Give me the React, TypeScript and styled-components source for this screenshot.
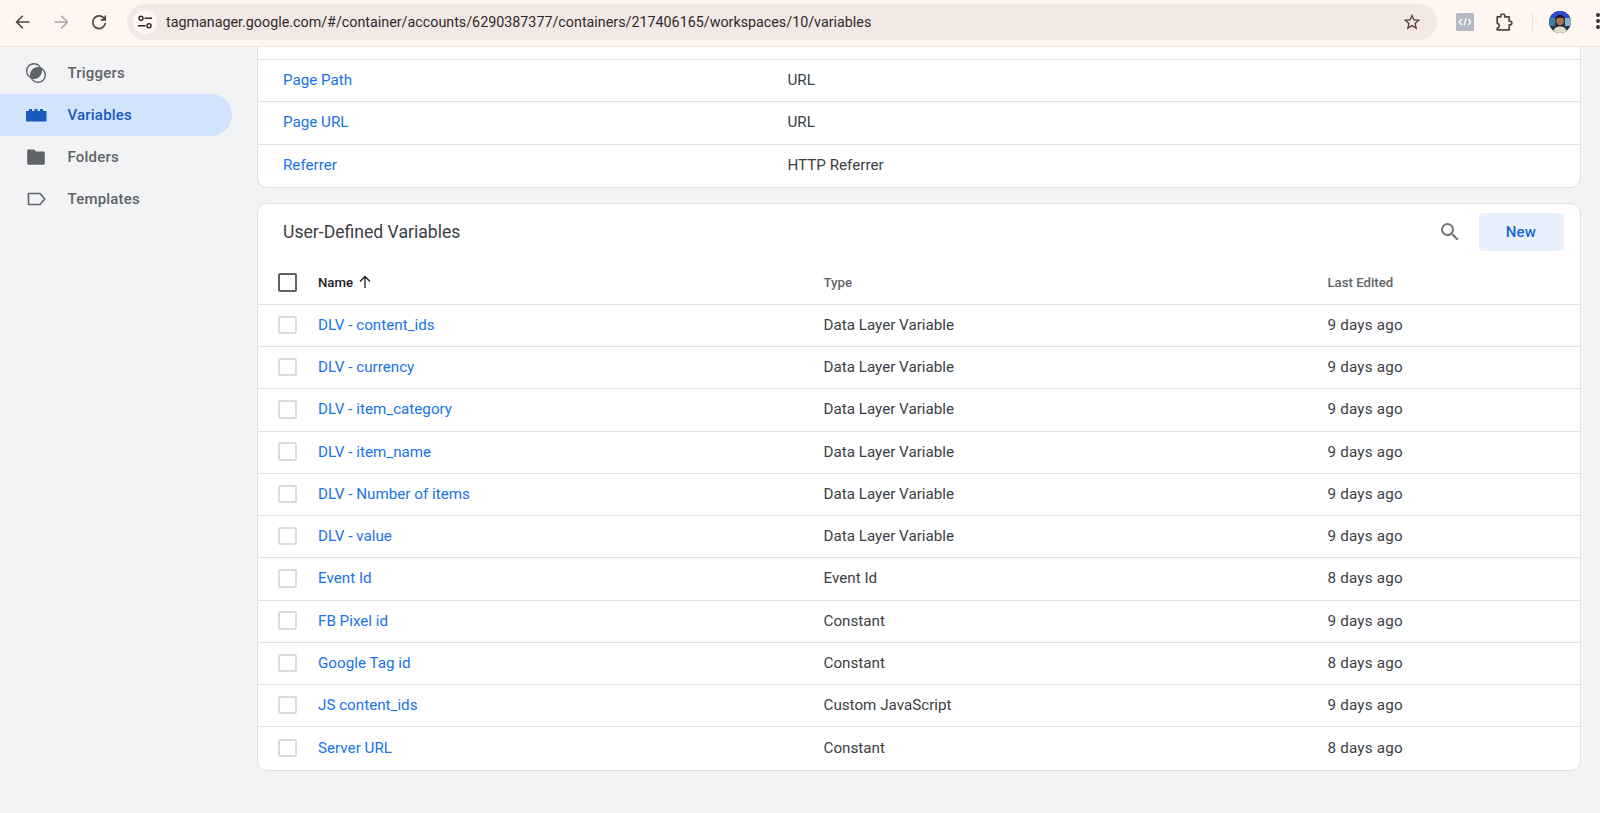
import React from "react";
import styled, { createGlobalStyle } from "styled-components";

const Global = createGlobalStyle`
  html, body { margin: 0; padding: 0; height: 100%; background: #f1f3f5; }
  body { font-family: Roboto, "Liberation Sans", sans-serif; overflow: hidden; }
  * { box-sizing: border-box; }
`;

const Page = styled.div`
  width: 1600px;
  height: 813px;
  display: flex;
  flex-direction: column;
  overflow: hidden;
  background: #f1f3f5;
`;

const ChromeBar = styled.header`
  height: 47px;
  flex: none;
  display: flex;
  align-items: center;
  background: #fff5f1;
  border-bottom: 1px solid #fbdccd;
  padding: 0 0 2px 11px;
  position: relative;
`;

const NavButton = styled.span<{ $dim?: boolean }>`
  width: 24px;
  height: 24px;
  margin-right: 14px;
  flex: none;
  display: flex;
  color: ${(p) => (p.$dim ? "#aaa6a4" : "#55433c")};
`;

const UrlPill = styled.div`
  width: 1310px;
  height: 36px;
  margin-left: 2px;
  flex: none;
  border-radius: 18px;
  background: #f4e8e5;
  display: flex;
  align-items: center;
  padding: 0 15px 0 6px;
`;

const SiteChip = styled.span`
  width: 24px;
  height: 24px;
  border-radius: 50%;
  background: #fff7f4;
  color: #2c2422;
  display: flex;
  align-items: center;
  justify-content: center;
  flex: none;
`;

const UrlText = styled.span`
  margin-left: 9px;
  font-size: 14.3px;
  color: #2f2a2a;
  white-space: nowrap;
  flex: 1;
`;

const ChromeIcon = styled.span<{ $gap?: number }>`
  display: flex;
  flex: none;
  color: #55433c;
  margin-left: ${(p) => p.$gap ?? 0}px;
`;

const Separator = styled.span`
  width: 1px;
  height: 18px;
  background: #fbd9c9;
  margin-left: 18px;
  flex: none;
`;

const Dots = styled.span`
  position: absolute;
  left: 1596px;
  top: 13px;
  display: flex;
  flex-direction: column;
  gap: 2.4px;
`;

const Dot = styled.i`
  width: 3.8px;
  height: 3.8px;
  border-radius: 50%;
  background: #3d3230;
  display: block;
`;

const Body = styled.div`
  flex: 1;
  display: flex;
  min-height: 0;
`;

const Sidebar = styled.nav`
  width: 257px;
  flex: none;
  padding: 4.5px 25px 0 0;
`;

const NavItem = styled.div<{ $active?: boolean }>`
  height: 42.25px;
  display: flex;
  align-items: center;
  padding-left: 25px;
  border-radius: 0 21px 21px 0;
  font-size: 15px;
  font-weight: 500;
  letter-spacing: 0.2px;
  color: ${(p) => (p.$active ? "#185abc" : "#5f6368")};
  background: ${(p) => (p.$active ? "#d2e3fc" : "transparent")};
`;

const NavIcon = styled.span`
  width: 22px;
  height: 22px;
  margin-right: 20.5px;
  display: flex;
  flex: none;
`;

const Main = styled.main`
  flex: 1;
  display: flex;
  flex-direction: column;
  gap: 15px;
  padding-right: 19.5px;
`;

const Card = styled.section<{ $flatTop?: boolean }>`
  background: #fff;
  border: 1px solid #dfe1e5;
  border-top-width: ${(p) => (p.$flatTop ? 0 : 1)}px;
  border-radius: ${(p) => (p.$flatTop ? "0 0 10px 10px" : "10px")};
`;

const TopGap = styled.div`
  height: 13px;
  border-bottom: 1px solid #dfe1e5;
`;

const BuiltInRow = styled.div`
  height: 42.25px;
  display: grid;
  grid-template-columns: 504.5px 1fr;
  align-items: center;
  padding: 0 0 2px 25px;
  border-bottom: 1px solid #dfe1e5;
  &:last-child { border-bottom: 0; }
`;

const LinkText = styled.a`
  color: #1a73e8;
  font-size: 15.2px;
  text-decoration: none;
`;

const CellText = styled.span<{ $wide?: boolean }>`
  color: #3c4043;
  font-size: 15.2px;
  letter-spacing: ${(p) => (p.$wide ? "0.2px" : "0")};
`;

const CardHeader = styled.div`
  height: 56px;
  display: flex;
  align-items: center;
  padding: 0 16px 0 25px;
`;

const CardTitle = styled.h2`
  margin: 0;
  flex: 1;
  font-size: 17.6px;
  font-weight: 400;
  color: #3c4043;
`;

const SearchButton = styled.span`
  display: flex;
  color: #70757a;
  margin-right: 17px;
`;

const NewButton = styled.button`
  width: 85px;
  height: 38px;
  border: 0;
  border-radius: 4px;
  background: #e8f0fe;
  color: #1967d2;
  font: 500 15px Roboto, sans-serif;
  letter-spacing: 0.2px;
`;

const HeadRow = styled.div`
  height: 45px;
  padding-top: 1px;
  display: grid;
  grid-template-columns: 40px 505.5px 504px 1fr;
  align-items: center;
  padding-left: 20px;
  border-bottom: 1px solid #dfe1e5;
`;

const HeadCell = styled.span<{ $strong?: boolean }>`
  display: flex;
  align-items: center;
  gap: 5px;
  font-size: 13.2px;
  font-weight: 500;
  color: ${(p) => (p.$strong ? "#202124" : "#5f6368")};
`;

const DataRow = styled.div`
  height: 42.25px;
  display: grid;
  grid-template-columns: 40px 505.5px 504px 1fr;
  align-items: center;
  padding: 0 0 1px 20px;
  border-bottom: 1px solid #dfe1e5;
  &:last-child { border-bottom: 0; }
`;

const Check = styled.span<{ $dark?: boolean }>`
  width: 18.5px;
  height: 18.5px;
  border-radius: 2px;
  border: 2px solid ${(p) => (p.$dark ? "#5f6368" : "#dadce0")};
  display: block;
`;

const builtIn = [
  ["Page Path", "URL"],
  ["Page URL", "URL"],
  ["Referrer", "HTTP Referrer"],
];

const variables = [
  ["DLV - content_ids", "Data Layer Variable", "9 days ago"],
  ["DLV - currency", "Data Layer Variable", "9 days ago"],
  ["DLV - item_category", "Data Layer Variable", "9 days ago"],
  ["DLV - item_name", "Data Layer Variable", "9 days ago"],
  ["DLV - Number of items", "Data Layer Variable", "9 days ago"],
  ["DLV - value", "Data Layer Variable", "9 days ago"],
  ["Event Id", "Event Id", "8 days ago"],
  ["FB Pixel id", "Constant", "9 days ago"],
  ["Google Tag id", "Constant", "8 days ago"],
  ["JS content_ids", "Custom JavaScript", "9 days ago"],
  ["Server URL", "Constant", "8 days ago"],
];

const Arrow = ({ flip }: { flip?: boolean }) => (
  <svg width="24" height="24" viewBox="0 0 24 24" fill="none" stroke="currentColor" strokeWidth="1.6"
    style={flip ? { transform: "scaleX(-1)" } : undefined}>
    <path d="M18.5 12H6M11.8 5.8 5.6 12l6.2 6.2" />
  </svg>
);

const Reload = () => (
  <svg width="24" height="24" viewBox="0 0 24 24" fill="none" stroke="currentColor" strokeWidth="1.7">
    <path d="M17.6 9.2A6.3 6.3 0 1 0 18.3 13" />
    <path d="M18.2 5.4v4.4h-4.4" />
  </svg>
);

const Tune = () => (
  <svg width="16" height="16" viewBox="0 0 16 16" fill="none" stroke="currentColor" strokeWidth="1.4">
    <circle cx="4" cy="4.2" r="2" />
    <path d="M7.5 4.2H15M1 11.8h7.5" />
    <circle cx="12" cy="11.8" r="2" />
  </svg>
);

const Star = () => (
  <svg width="20" height="20" viewBox="0 0 24 24" fill="currentColor">
    <path d="M22 9.24l-7.19-.62L12 2 9.19 8.63 2 9.24l5.46 4.73L5.82 21 12 17.27 18.18 21l-1.63-7.03L22 9.24zM12 15.4l-3.76 2.27 1-4.28-3.32-2.88 4.38-.38L12 6.1l1.71 4.04 4.38.38-3.32 2.88 1 4.28L12 15.4z" />
  </svg>
);

const DevTag = () => (
  <svg width="18" height="18" viewBox="0 0 18 18">
    <rect width="18" height="18" rx="1.5" fill="#b3bac6" />
    <path d="M5.8 6 3.2 9l2.6 3M12.200 6l2.600 3-2.600 3M10 5.500 8 12.500" fill="none" stroke="#fff" strokeWidth="1.2" />
  </svg>
);

const Puzzle = () => (
  <svg width="20" height="20" viewBox="0 0 20 20" fill="none" stroke="currentColor" strokeWidth="1.7" strokeLinejoin="round">
    <path d="M3.200 4.800h3.600V4a2 2 0 0 1 4 0v.8h4.400v4.400h.8a1.800 1.800 0 0 1 0 3.600h-.8v5H3.200v-1.400c1-.3 2-1.200 2-2.600s-1-2.400-2-2.700z" />
  </svg>
);

const Avatar = () => (
  <svg width="22" height="22" viewBox="0 0 22 22">
    <defs>
      <clipPath id="avatar-clip"><circle cx="11" cy="11" r="11" /></clipPath>
    </defs>
    <g clipPath="url(#avatar-clip)">
      <rect width="22" height="22" fill="#27344f" />
      <rect width="22" height="7" fill="#2f4ad0" />
      <rect y="7" width="6" height="8" fill="#3f7f9f" />
      <rect x="16" y="7" width="6" height="8" fill="#8fb0c8" />
      <ellipse cx="11" cy="10" rx="3.800" ry="5" fill="#a9744f" />
      <path d="M6.600 8C6.500 2.800 15.500 2.800 15.400 8c-1.400-1.800-7.400-1.800-8.800 0z" fill="#17130f" />
      <path d="M8 12.500c1.500 2.600 4.500 2.600 6 0v2.500H8z" fill="#2a1c15" />
      <path d="M4 22c.5-5 3.500-6.500 7-6.500S17.500 17 18 22z" fill="#e4e0cc" />
    </g>
  </svg>
);

const TriggerIcon = () => (
  <svg width="22" height="22" viewBox="0 0 22 22" fill="none" stroke="#5f6368" strokeWidth="1.4">
    <defs>
      <clipPath id="trigger-lens"><circle cx="13" cy="13" r="7.300" /></clipPath>
    </defs>
    <circle cx="9" cy="9" r="7.300" fill="#5f6368" clipPath="url(#trigger-lens)" stroke="none" />
    <circle cx="9" cy="9" r="7.300" />
    <circle cx="13" cy="13" r="7.300" />
  </svg>
);

const BlockIcon = () => (
  <svg width="22" height="22" viewBox="0 0 22 22" fill="#185abc">
    <path d="M1 7h3V5h3v2h2.500V5h3v2H15V5h3v2h3.500v10.500H1z" />
  </svg>
);

const FolderIcon = () => (
  <svg width="22" height="22" viewBox="0 0 22 22" fill="#5f6368">
    <path d="M3.200 3.500h5.800l2 2h7.300c1 0 1.500.6 1.500 1.500v10.300c0 1-.6 1.500-1.500 1.500H3.700c-1 0-1.500-.5-1.500-1.500V4.500c0-.7.400-1 1-1z" />
  </svg>
);

const TagIcon = () => (
  <svg width="22" height="22" viewBox="0 0 22 22" fill="none" stroke="#5f6368" strokeWidth="1.6" strokeLinejoin="round">
    <path d="M3.500 5.500h11.500l4.800 5.500-4.800 5.500H3.500z" />
  </svg>
);

const Search = () => (
  <svg width="24" height="24" viewBox="0 0 24 24" fill="currentColor">
    <path d="M15.500 14h-.79l-.28-.27A6.470 6.470 0 0 0 16 9.500 6.500 6.500 0 1 0 9.500 16c1.610 0 3.090-.59 4.230-1.570l.27.28v.79l5 4.990L20.490 19l-4.990-5zm-6 0C7.010 14 5 11.990 5 9.500S7.010 5 9.500 5 14 7.010 14 9.500 11.990 14 9.500 14z" />
  </svg>
);

const SortUp = () => (
  <svg width="14" height="14" viewBox="0 0 14 14" fill="none" stroke="#202124" strokeWidth="1.300">
    <path d="M7 13V1.500M2 6.500l5-5 5 5" />
  </svg>
);

export default function App() {
  return (
    <Page>
      <Global />
      <ChromeBar>
        <NavButton><Arrow /></NavButton>
        <NavButton $dim><Arrow flip /></NavButton>
        <NavButton><Reload /></NavButton>
        <UrlPill>
          <SiteChip><Tune /></SiteChip>
          <UrlText>tagmanager.google.com/#/container/accounts/6290387377/containers/217406165/workspaces/10/variables</UrlText>
          <ChromeIcon><Star /></ChromeIcon>
        </UrlPill>
        <ChromeIcon $gap={19}><DevTag /></ChromeIcon>
        <ChromeIcon $gap={20}><Puzzle /></ChromeIcon>
        <Separator />
        <ChromeIcon $gap={16}><Avatar /></ChromeIcon>
        <Dots><Dot /><Dot /><Dot /></Dots>
      </ChromeBar>
      <Body>
        <Sidebar>
          <NavItem><NavIcon><TriggerIcon /></NavIcon>Triggers</NavItem>
          <NavItem $active><NavIcon><BlockIcon /></NavIcon>Variables</NavItem>
          <NavItem><NavIcon><FolderIcon /></NavIcon>Folders</NavItem>
          <NavItem><NavIcon><TagIcon /></NavIcon>Templates</NavItem>
        </Sidebar>
        <Main>
          <Card $flatTop>
            <TopGap />
            {builtIn.map(([name, type]) => (
              <BuiltInRow key={name}>
                <LinkText>{name}</LinkText>
                <CellText>{type}</CellText>
              </BuiltInRow>
            ))}
          </Card>
          <Card>
            <CardHeader>
              <CardTitle>User-Defined Variables</CardTitle>
              <SearchButton><Search /></SearchButton>
              <NewButton>New</NewButton>
            </CardHeader>
            <HeadRow>
              <Check $dark />
              <HeadCell $strong>Name <SortUp /></HeadCell>
              <HeadCell>Type</HeadCell>
              <HeadCell>Last Edited</HeadCell>
            </HeadRow>
            {variables.map(([name, type, edited]) => (
              <DataRow key={name}>
                <Check />
                <LinkText>{name}</LinkText>
                <CellText>{type}</CellText>
                <CellText $wide>{edited}</CellText>
              </DataRow>
            ))}
          </Card>
        </Main>
      </Body>
    </Page>
  );
}
